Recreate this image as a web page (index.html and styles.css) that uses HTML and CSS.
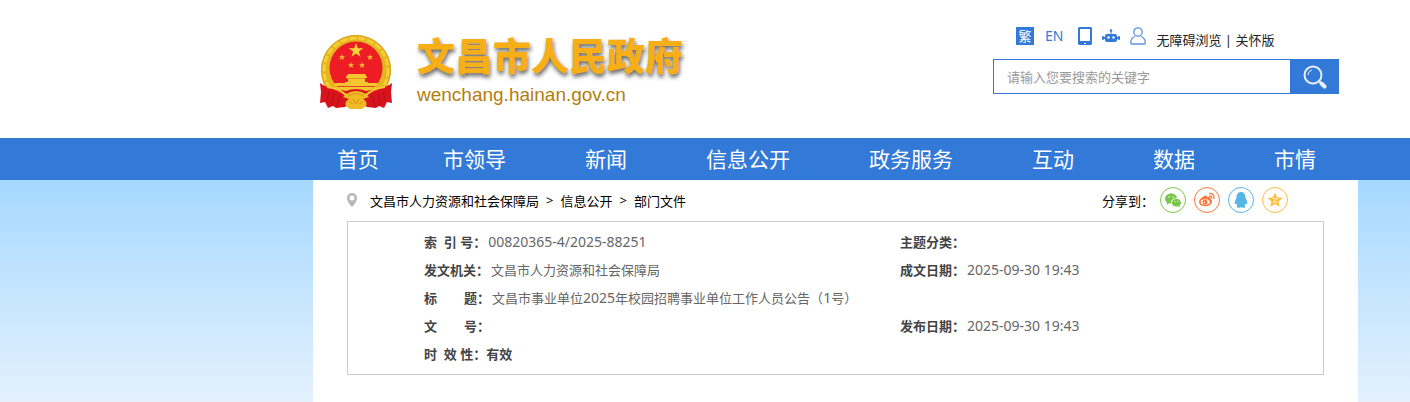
FILE: index.html
```
<!DOCTYPE html>
<html lang="zh-CN">
    <head>
        <meta charset="UTF-8">
        <title>文昌市人民政府</title>
        <meta name="viewport" content="width=device-width, initial-scale=1.0">
        <link rel="stylesheet" href="styles.css">
    </head>
    <body>

        <header class="header">
            <a class="logo" href="#">
                <svg class="emblem" viewBox="0 0 72 76" aria-hidden="true">
                    <circle cx="36" cy="36" r="35" fill="#e6b41d"/>
                    <circle cx="36" cy="36" r="32" fill="none" stroke="#f3cf3a" stroke-width="3" stroke-dasharray="7 2"/>
                    <circle cx="36" cy="36" r="34.500" fill="none" stroke="#d9a21c"/>
                    <circle cx="36" cy="34" r="26.500" fill="#ee1c25"/>
                    <path fill="#fbd43a" d="M36 9l1.800 5.200h5.500l-4.400 3.300 1.600 5.200-4.500-3.100-4.500 3.100 1.600-5.200-4.400-3.300h5.500z"/>
                    <path id="star" fill="#f6c132" d="M22 20l.8 2.200h2.300l-1.800 1.400.7 2.300-2-1.400-2 1.400.7-2.300-1.800-1.400h2.300z"/>
                    <use href="#star" x="28"/>
                    <use href="#star" x="9" y="8"/>
                    <use href="#star" x="20" y="8"/>
                    <path fill="#f7c52f" d="M28 40h17l2 3v1h-2v4h3v3h-23v-3h3v-4h-2v-1z"/>
                    <path stroke="#e09a1c" d="M27 44.500h18"/>
                    <path fill="#f5c62f" d="M14 49h44l-3 7q-19 9-38 0z"/>
                    <path stroke="#e2421f" d="M17 52.500h38"/>
                    <path fill="#d9131d" d="M0 49q5 4 12 5l14 3q10-4 20 0l14-3q7-1 12-5l-1 9 1 11-5-1-3 6-5-2-3 2-9-1q-11-9-22 0l-9 1-3-2-5 2-3-6-5 1 1-11z"/>
                    <path fill="none" stroke="#b51119" d="M9 57l-2 10M14 59l-2 12M20 62l-3 10M63 57l2 10M58 59l2 12M52 62l3 10"/>
                    <path fill="#efba24" d="M26 60q10-6 20 0l3 3-6 2q5 3 3 7l-4 3H30l-4-3q-2-4 3-7l-6-2z"/>
                    <path fill="none" stroke="#d9941b" d="M28 62q8-5 16 0M29 68l4 2M43 68l-4 2M33 65l3 5 3-5"/>
                    <path fill="none" stroke="#f4c92f" stroke-width="2" d="M7 53q12 1 20 9M65 53q-12 1-20 9"/>
                </svg>
                <span class="site">
                    <span class="site-name">文昌市人民政府</span>
                    <span class="site-url">wenchang.hainan.gov.cn</span>
                </span>
            </a>

            <div class="tools">
                <div class="links">
                    <a class="trad" href="#">繁</a>
                    <a class="en" href="#">EN</a>
                    <a href="#" aria-label="手机版">
                        <svg class="icon-phone" viewBox="0 0 14 18"><path fill="#337ad8" fill-rule="evenodd" d="M1 0h12l1 1v16l-1 1H1l-1-1V1zM2 2v12h10V2zM6 16v1h2v-1z"/></svg>
                    </a>
                    <a href="#" aria-label="智能机器人">
                        <svg class="icon-robot" viewBox="0 0 18 14"><g fill="#337ad8"><circle cx="9" cy="1.500" r="1.300"/><path d="M8.500 2h1v3h-1z"/><rect x="3" y="5" width="12" height="8" rx="2"/><rect y="7" width="2" height="4" rx="1"/><rect x="16" y="7" width="2" height="4" rx="1"/><path d="M1 8h16v2H1z"/></g><circle cx="6.500" cy="8.500" r="1.200" fill="#fff"/><circle cx="11.500" cy="8.500" r="1.200" fill="#fff"/></svg>
                    </a>
                    <a href="#" aria-label="个人中心">
                        <svg class="icon-user" viewBox="0 0 16 18"><g fill="none" stroke="#5b94e0" stroke-width="1.300"><circle cx="8" cy="5" r="4.200"/><path d="M5 9.500Q.7 11 .7 16q0 1 1 1h12.600q1 0 1-1 0-5-4.300-6.500"/></g></svg>
                    </a>
                    <span class="access"><a href="#">无障碍浏览</a> | <a href="#">关怀版</a></span>
                </div>
                <form class="search">
                    <input type="text" name="keyword" aria-label="搜索" placeholder="请输入您要搜索的关键字">
                    <button type="submit" aria-label="搜索">
                        <svg class="icon-search" viewBox="0 0 24 24"><g fill="none" stroke="#e6effb"><circle cx="10" cy="10" r="8.500" stroke-width="2"/><path stroke-width="1" d="M5 10q0-4 4-5"/><path stroke-width="2" d="M15.500 15.500l3 3"/><path stroke-width="4" stroke-linecap="round" d="M18.500 18.500l3 3"/></g></svg>
                    </button>
                </form>
            </div>
        </header>

        <nav class="nav">
            <a href="#">首页</a>
            <a href="#">市领导</a>
            <a href="#">新闻</a>
            <a href="#">信息公开</a>
            <a href="#">政务服务</a>
            <a href="#">互动</a>
            <a href="#">数据</a>
            <a href="#">市情</a>
        </nav>

        <div class="page">
            <main class="content">
                <div class="bar">
                    <div class="crumbs">
                        <svg class="icon-pin" viewBox="0 0 10 14"><path fill="#b7b7b7" fill-rule="evenodd" d="M5 0a5 5 0 0 1 5 5q0 4-5 9Q0 9 0 5a5 5 0 0 1 5-5zm0 2.500a2.500 2.500 0 1 0 0 5 2.500 2.500 0 0 0 0-5z"/></svg>
                        <a href="#">文昌市人力资源和社会保障局</a>
                        <span class="sep">&gt;</span>
                        <a href="#">信息公开</a>
                        <span class="sep">&gt;</span>
                        <a href="#">部门文件</a>
                    </div>
                    <div class="share">
                        <span>分享到：</span>
                        <a class="wechat" href="#" aria-label="微信">
                            <svg viewBox="0 0 16 16"><g fill="#7bc549"><path d="M6 1.500c3.300 0 5.700 2 5.900 4.500C8 6 5.500 8.500 6 11.500l-2.500 0L1.500 13l.5-2.500C.8 9.500 0 8.300 0 6.800 0 3.800 2.700 1.500 6 1.500z"/><path d="M11.400 6.700c2.600 0 4.600 1.800 4.600 4 0 1.200-.6 2.200-1.500 2.900l.4 1.600-1.700-.9c-3.600 1-6.400-1-6.400-3.600 0-2.200 2-4 4.600-4z"/></g><g fill="#fff"><circle cx="4" cy="5" r=".7"/><circle cx="8" cy="5" r=".7"/><circle cx="10" cy="9.500" r=".6"/><circle cx="13" cy="9.500" r=".6"/></g></svg>
                        </a>
                        <a class="weibo" href="#" aria-label="微博">
                            <svg viewBox="0 0 16 16"><path fill="#ff763b" d="M6.500 3.500c1.300-.4 2 .5 1.500 2 2.300-.8 4-.5 3.600 1.700 1.500.5 2 1.600 1.400 3-1 2.700-4.200 4.300-7.300 4C2 14 0 12.300 0 10c0-2.300 3.500-5.800 6.500-6.500z"/><ellipse cx="6.200" cy="10" rx="4.500" ry="2.800" fill="#fff"/><circle cx="6" cy="10" r="2.500" fill="#ff763b"/><circle cx="5.300" cy="10.500" r=".7" fill="#fff"/><path fill="none" stroke="#ff763b" stroke-width="1.300" stroke-linecap="round" d="M10.500 1.500c3-.5 5.200 2 4.300 5M10.800 4c1.300-.2 2.100.8 1.800 2"/></svg>
                        </a>
                        <a class="qq" href="#" aria-label="QQ">
                            <svg viewBox="0 0 16 16"><path fill="#56b6e7" d="M8 0c2.800 0 4.500 2 4.500 5 0 1 .4 1.700.8 2.500.8 1.500 1.300 3 .9 4.300-.3.600-.9.200-1.400-.6-.2.900-.6 1.500-1.200 2.200 1.200.5 1.200 2-.7 2.300-1.100.2-2.300 0-2.900-.4-.6.400-1.800.6-2.900.4-1.900-.3-1.900-1.800-.7-2.300-.6-.7-1-1.300-1.200-2.200-.5.800-1.100 1.200-1.400.6-.4-1.300.1-2.800.9-4.300.4-.8.800-1.500.8-2.500C3.500 2 5.200 0 8 0z"/></svg>
                        </a>
                        <a class="qzone" href="#" aria-label="QQ空间">
                            <svg viewBox="0 0 16 16"><path fill="#fdbe3d" d="M8 .5l2.200 4.800 5.300.6-4 3.500 1.200 5.300L8 12.100l-4.700 2.600 1.200-5.300-4-3.500 5.300-.6z"/><path fill="none" stroke="#fff" stroke-width=".7" d="M5.500 6.500h5L6 10q3 .6 5 0"/></svg>
                        </a>
                    </div>
                </div>

                <table class="info">
                    <tr>
                        <td><b>索&nbsp;&nbsp;引&nbsp;号：</b><span class="num">00820365-4/2025-88251</span></td>
                        <td><b>主题分类：</b></td>
                    </tr>
                    <tr>
                        <td><b>发文机关：</b>文昌市人力资源和社会保障局</td>
                        <td><b>成文日期：</b><span class="num">2025-09-30 19:43</span></td>
                    </tr>
                    <tr>
                        <td colspan="2"><b>标&nbsp;&nbsp;&nbsp;&nbsp;&nbsp;&nbsp;&nbsp;&nbsp;题：</b>文昌市事业单位<span class="num">2025</span>年校园招聘事业单位工作人员公告（<span class="num">1</span>号）</td>
                    </tr>
                    <tr>
                        <td><b>文&nbsp;&nbsp;&nbsp;&nbsp;&nbsp;&nbsp;&nbsp;&nbsp;号：</b></td>
                        <td><b>发布日期：</b><span class="num">2025-09-30 19:43</span></td>
                    </tr>
                    <tr>
                        <td colspan="2"><b>时&nbsp;&nbsp;效&nbsp;性：有效</b></td>
                    </tr>
                </table>
            </main>
        </div>
    </body>
</html>
```
FILE: styles.css
```
*{
    margin: 0;
    padding: 0;
    box-sizing: border-box;
}

body{
    min-height: 100vh;
    display: flex;
    flex-direction: column;
    font-family: "Noto Sans", "Noto Sans CJK SC", sans-serif;
    font-size: 13px;
    color: #000;
    background-color: #fff;
}

a{
    color: inherit;
    text-decoration: none;
}

svg{
    display: block;
}

/* header */
.header{
    display: flex;
    justify-content: space-between;
    height: 138px;
    padding: 26px 71px 0 320px;
}

.logo{
    display: flex;
    gap: 25px;
    padding-top: 8px;
}

.emblem{
    width: 72px;
    height: 76px;
}

.site{
    display: flex;
    flex-direction: column;
}

.site-name{
    font-size: 38px;
    font-weight: 900;
    line-height: 42px;
    color: #f7ae17;
    text-shadow: 1px 3px 4px rgba(0, 0, 0, 0.6);
}

.site-url{
    margin-top: 7px;
    font-family: "Liberation Sans", sans-serif;
    font-size: 19px;
    line-height: 24px;
    color: #b47d0c;
}

.tools{
    width: 346px;
}

.links{
    display: flex;
    align-items: center;
    height: 19px;
    padding-left: 23px;
    color: #337ad8;
}

.trad{
    width: 18px;
    line-height: 18px;
    margin-right: 11px;
    text-align: center;
    color: #fff;
    background-color: #337ad8;
}

.en{
    margin-right: 15px;
    font-size: 14px;
}

.icon-phone{
    width: 14px;
    height: 18px;
    margin-right: 10px;
}

.icon-robot{
    width: 18px;
    height: 14px;
    margin-right: 10px;
}

.icon-user{
    width: 16px;
    height: 18px;
    margin-right: 10px;
}

.access{
    padding-top: 8px;
    color: #222;
}

.search{
    display: flex;
    height: 35px;
    margin-top: 14px;
}

.search input{
    flex: 1;
    min-width: 0;
    padding: 0 13px;
    border: 1px solid #337ad8;
    font: inherit;
    outline: none;
}

.search input::placeholder{
    color: #999;
}

.search button{
    display: flex;
    align-items: center;
    justify-content: center;
    width: 48px;
    border: none;
    background-color: #337ad8;
}

.icon-search{
    width: 24px;
    height: 24px;
}

/* main menu */
.nav{
    display: flex;
    padding-left: 313px;
    background-color: #337ad8;
    color: #fff;
    font-size: 21px;
    line-height: 42px;
    white-space: nowrap;
}

.nav a{
    padding: 0 39px 0 40px;
}

.nav a:first-child{
    padding: 0 24px;
}

/* content */
.page{
    flex: 1;
    padding: 0 52px 0 313px;
    background: linear-gradient(#a6d8ff, #e4f1fd);
}

.content{
    height: 100%;
    padding: 0 34px 27px;
    background-color: #fff;
}

.bar{
    display: flex;
    justify-content: space-between;
    height: 41px;
    padding-right: 36px;
}

.crumbs, .share{
    display: flex;
    align-items: center;
    height: 40px;
}

.icon-pin{
    width: 10px;
    height: 14px;
    margin-right: 13px;
}

.sep{
    margin: 0 7px;
}

.share{
    gap: 8px;
}

.share span{
    margin-right: -2px;
}

.share a{
    display: flex;
    align-items: center;
    justify-content: center;
    width: 26px;
    height: 26px;
    border: 1px solid;
    border-radius: 50%;
}

.share svg{
    width: 16px;
    height: 16px;
}

.wechat{
    color: #7bc549;
}

.weibo{
    color: #ff763b;
}

.qq{
    color: #56b6e7;
}

.qzone{
    color: #fdbe3d;
}

.info{
    display: block;
    padding: 6px 0 6px 76px;
    border: 1px solid #ccc;
    border-collapse: separate;
    border-spacing: 0;
    color: #666;
}

.info td{
    height: 28px;
    line-height: 28px;
    vertical-align: middle;
}

.info td:first-child{
    width: 476px;
}

.info b{
    margin-right: 2px;
    color: #444;
}

.num{
    font-size: 14px;
    line-height: 20px;
}
```
